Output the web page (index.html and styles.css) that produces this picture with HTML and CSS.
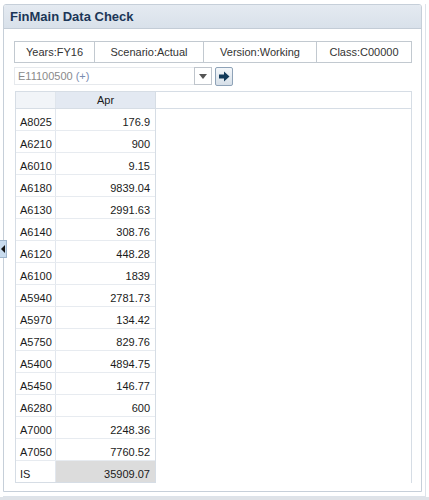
FILE: index.html
```html
<!DOCTYPE html>
<html>
<head>
<meta charset="utf-8">
<link rel="stylesheet" href="styles.css">
</head>
<body>
<div class="page">
  <div class="frame">
    <div class="panel">
      <div class="titlebar"><span class="title">FinMain Data Check</span></div>
      <div class="content">
        <div class="dims">
          <div class="dim dim-years">Years:FY16</div>
          <div class="dim dim-scenario">Scenario:Actual</div>
          <div class="dim dim-version">Version:Working</div>
          <div class="dim dim-class">Class:C00000</div>
        </div>
        <div class="member-row">
          <div class="member-input">E11100500 <span class="plus">(+)</span></div>
          <div class="dd-btn"><span class="dd-tri"></span></div>
          <div class="go-btn">
            <svg width="12" height="11" viewBox="0 0 12 11"><path d="M1 3.5 H6 V0.5 L11.5 5.5 L6 10.5 V7.5 H1 Z" fill="#123a5a"/></svg>
          </div>
        </div>
        <div class="grid">
          <div class="grid-head">
            <div class="cell corner"></div>
            <div class="cell colhead">Apr</div>
            <div class="head-rest"></div>
          </div>
          <div class="grid-body">
            <div class="rows">
              <div class="row"><div class="cell label">A8025</div><div class="cell val">176.9</div></div>
              <div class="row"><div class="cell label">A6210</div><div class="cell val">900</div></div>
              <div class="row"><div class="cell label">A6010</div><div class="cell val">9.15</div></div>
              <div class="row"><div class="cell label">A6180</div><div class="cell val">9839.04</div></div>
              <div class="row"><div class="cell label">A6130</div><div class="cell val">2991.63</div></div>
              <div class="row"><div class="cell label">A6140</div><div class="cell val">308.76</div></div>
              <div class="row"><div class="cell label">A6120</div><div class="cell val">448.28</div></div>
              <div class="row"><div class="cell label">A6100</div><div class="cell val">1839</div></div>
              <div class="row"><div class="cell label">A5940</div><div class="cell val">2781.73</div></div>
              <div class="row"><div class="cell label">A5970</div><div class="cell val">134.42</div></div>
              <div class="row"><div class="cell label">A5750</div><div class="cell val">829.76</div></div>
              <div class="row"><div class="cell label">A5400</div><div class="cell val">4894.75</div></div>
              <div class="row"><div class="cell label">A5450</div><div class="cell val">146.77</div></div>
              <div class="row"><div class="cell label">A6280</div><div class="cell val">600</div></div>
              <div class="row"><div class="cell label">A7000</div><div class="cell val">2248.36</div></div>
              <div class="row"><div class="cell label">A7050</div><div class="cell val">7760.52</div></div>
              <div class="row total"><div class="cell label">IS</div><div class="cell val">35909.07</div></div>
            </div>
          </div>
        </div>
      </div>
    </div>
  </div>
  <div class="bottom-strip"></div>
  <div class="handle"><span class="handle-tri"></span></div>
</div>
</body>
</html>
```

FILE: styles.css
```css
html, body {
  margin: 0;
  padding: 0;
  background: #ffffff;
}

.page {
  position: relative;
  width: 429px;
  height: 500px;
  display: flex;
  flex-direction: column;
  font-family: "Liberation Sans", Arial, sans-serif;
  font-size: 11px;
  color: #1a1a1a;
  overflow: hidden;
}

.frame {
  margin: 4px 0 0 3px;
  width: 423px;
  height: 493px;
  box-sizing: border-box;
  padding: 0 3px 4px 0;
  border-right: 1px solid #dde3ea;
  border-bottom: 1px solid #dde3ea;
}

.panel {
  width: 419px;
  height: 488px;
  box-sizing: border-box;
  border: 1px solid #c6cfd9;
  border-radius: 3px 3px 0 0;
  display: flex;
  flex-direction: column;
  background: #fff;
}

.titlebar {
  height: 24px;
  box-sizing: border-box;
  background: linear-gradient(#e4eaf1, #d9e1ea);
  border-bottom: 1px solid #c3ccd6;
  display: flex;
  align-items: center;
  padding-left: 6px;
  border-radius: 2px 2px 0 0;
}

.title {
  font-weight: bold;
  font-size: 13px;
  color: #1b3657;
}

.content {
  padding: 12px 9px 0 10px;
  display: flex;
  flex-direction: column;
}

.dims {
  display: flex;
  height: 22px;
}

.dim {
  box-sizing: border-box;
  height: 22px;
  border: 1px solid #c2c9d0;
  border-left: none;
  display: flex;
  align-items: center;
  justify-content: center;
  color: #333;
}

.dim-years { width: 81px; border-left: 1px solid #c2c9d0; }
.dim-scenario { width: 109px; }
.dim-version { width: 113px; }
.dim-class { width: 95px; }

.member-row {
  display: flex;
  align-items: center;
  margin-top: 4px;
  height: 18px;
}

.member-input {
  width: 180px;
  height: 18px;
  box-sizing: border-box;
  border: 1px solid #e6e9ed;
  border-right: none;
  color: #8a8a8a;
  padding-left: 3px;
  display: flex;
  align-items: center;
}

.plus {
  color: #7a8cb0;
  margin-left: 3px;
}

.dd-btn {
  width: 18px;
  height: 18px;
  box-sizing: border-box;
  border: 1px solid #bfc5cc;
  background: #fff;
  display: flex;
  align-items: center;
  justify-content: center;
}

.dd-tri {
  width: 0;
  height: 0;
  border-left: 4px solid transparent;
  border-right: 4px solid transparent;
  border-top: 5px solid #555;
}

.go-btn {
  margin-left: 3px;
  width: 18px;
  height: 19px;
  box-sizing: border-box;
  border: 1px solid #8fa3b8;
  border-radius: 2px;
  background: linear-gradient(#f4f7fa, #d6dfe8);
  display: flex;
  align-items: center;
  justify-content: center;
}

.grid {
  margin-top: 6px;
  margin-left: 1px;
  width: 397px;
  box-sizing: border-box;
  border-top: 1px solid #d6dde5;
  border-left: 1px solid #d6dde5;
  border-right: 1px solid #d6dde5;
  display: flex;
  flex-direction: column;
}

.grid-head {
  display: flex;
  height: 17px;
  box-sizing: border-box;
  border-bottom: 1px solid #d6dde5;
}

.cell {
  box-sizing: border-box;
  display: flex;
  align-items: center;
}

.corner {
  width: 40px;
  background: #f1f4f8;
  border-right: 1px solid #dfe5ec;
}

.colhead {
  width: 100px;
  background: #e3e9f2;
  border-right: 1px solid #d6dde5;
  justify-content: center;
}

.head-rest {
  flex: 1;
}

.grid-body {
  display: flex;
}

.rows {
  width: 140px;
  border-right: 1px solid #d6dde5;
  box-sizing: border-box;
  display: flex;
  flex-direction: column;
}

.row {
  display: flex;
  height: 22px;
  box-sizing: border-box;
  border-bottom: 1px solid #e7ebf0;
}

.row .cell {
  align-items: flex-end;
  padding-bottom: 2px;
}

.label {
  width: 40px;
  padding-left: 4px;
  border-right: 1px solid #e2e7ee;
}

.val {
  width: 99px;
  justify-content: flex-end;
  padding-right: 5px;
}

.total .val {
  background: #dcdcdc;
}

.total {
  border-bottom: 1px solid #d6dde5;
}

.bottom-strip {
  flex: 1;
  background: #dfe3e8;
}

.handle {
  position: absolute;
  left: 0;
  top: 240px;
  width: 7px;
  height: 18px;
  box-sizing: border-box;
  background: #c8dbee;
  border: 1px solid #9fb5cc;
  border-left: none;
  display: flex;
  align-items: center;
  justify-content: center;
}

.handle-tri {
  width: 0;
  height: 0;
  border-top: 4px solid transparent;
  border-bottom: 4px solid transparent;
  border-right: 4px solid #111;
}
```
